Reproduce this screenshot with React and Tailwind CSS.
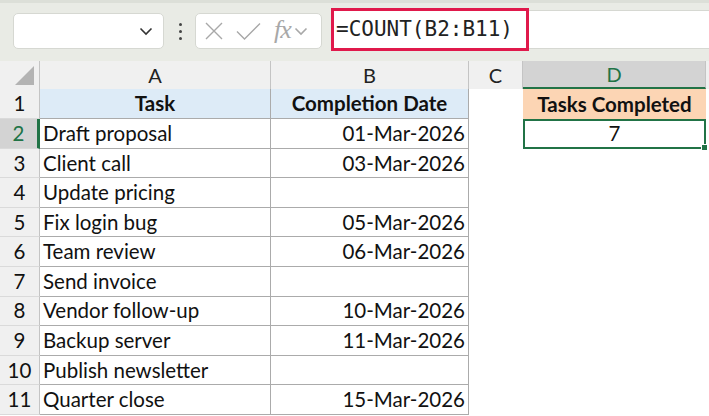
import React from "react";

const rows = [
  ["Draft proposal", "01-Mar-2026"],
  ["Client call", "03-Mar-2026"],
  ["Update pricing", ""],
  ["Fix login bug", "05-Mar-2026"],
  ["Team review", "06-Mar-2026"],
  ["Send invoice", ""],
  ["Vendor follow-up", "10-Mar-2026"],
  ["Backup server", "11-Mar-2026"],
  ["Publish newsletter", ""],
  ["Quarter close", "15-Mar-2026"],
];

const cellFont = { fontFamily: "Lato, 'Open Sans', sans-serif" };

function Chevron({ className }) {
  return (
    <svg width="14" height="9" viewBox="0 0 14 9" className={className}>
      <polyline points="1.5,1.5 7,7 12.5,1.5" fill="none" stroke="currentColor" strokeWidth="1.6" />
    </svg>
  );
}

function Toolbar() {
  return (
    <div className="relative h-[61px] bg-[#e9ebe5] border-t-[3px] border-[#dcdfd8] flex items-start">
      {/* name box */}
      <div className="mt-[10px] ml-[13px] w-[151px] h-[36px] bg-white border border-[#d6d8d2] rounded-[5px] flex items-center justify-end pr-[10px] text-[#333]">
        <Chevron />
      </div>
      {/* colon */}
      <div className="ml-[15px] mt-[20px] flex flex-col gap-[4px]">
        <div className="w-[3px] h-[3px] bg-[#444] rounded-full" />
        <div className="w-[3px] h-[3px] bg-[#444] rounded-full" />
        <div className="w-[3px] h-[3px] bg-[#444] rounded-full" />
      </div>
      {/* function box */}
      <div className="mt-[10px] ml-[13px] w-[127px] h-[36px] bg-white border border-[#d6d8d2] rounded-[5px] flex items-center text-[#a8a8a8]">
        <svg width="18" height="18" viewBox="0 0 18 18" className="ml-[9px]">
          <path d="M1 1 L17 17 M17 1 L1 17" stroke="currentColor" strokeWidth="1.4" fill="none" />
        </svg>
        <svg width="25" height="18" viewBox="0 0 25 18" className="ml-[13px]">
          <polyline points="1,9.5 8.5,17 24,1.5" stroke="currentColor" strokeWidth="1.4" fill="none" />
        </svg>
        <span
          className="ml-[13px] -mt-[2px] italic text-[26px] leading-none tracking-[-1px]"
          style={{ fontFamily: "'Liberation Serif', serif" }}
        >
          fx
        </span>
        <Chevron className="ml-[3px] text-[#a8a8a8]" />
      </div>
      {/* formula bar */}
      <div className="mt-[7px] ml-[10px] flex-1 h-[39px] bg-white border-y border-[#d6d8d2] flex items-center">
        <div className="h-[43px] -ml-px w-[198px] border-[3px] border-[#e0194b] flex items-center pl-[2px]">
          <span className="text-[21px] text-[#222]" style={{ fontFamily: "'DejaVu Sans Mono', monospace" }}>
            =COUNT(B2:B11)
          </span>
        </div>
      </div>
    </div>
  );
}

function ColHeaders() {
  const cols = [
    { l: "A", w: "w-[231px]" },
    { l: "B", w: "w-[198px]" },
    { l: "C", w: "w-[54px]" },
  ];
  return (
    <div className="flex h-[28px] bg-[#f0f0f0] text-[20px] text-[#222]" style={cellFont}>
      <div className="w-[40px] shrink-0 border-r border-[#c4c4c4] relative">
        <div
          className="absolute right-[5px] bottom-[4px] w-[19px] h-[19px] bg-[#b3b3b3]"
          style={{ clipPath: "polygon(100% 0, 100% 100%, 0 100%)" }}
        />
      </div>
      {cols.map((c) => (
        <div key={c.l} className={`${c.w} shrink-0 border-r border-[#c4c4c4] flex items-center justify-center`}>
          {c.l}
        </div>
      ))}
      <div className="w-[183px] shrink-0 bg-[#d3d3d3] border-r border-[#c4c4c4] border-b-2 border-b-[#217346] text-[#217346] flex items-center justify-center">
        D
      </div>
      <div className="flex-1" />
    </div>
  );
}

export default function App() {
  return (
    <div className="w-[709px] h-[416px] overflow-hidden bg-white">
      <Toolbar />
      <ColHeaders />
      <div className="text-[20.5px] text-[#111]" style={cellFont}>
        {/* header row */}
        <div className="flex h-[30px]">
          <div className="w-[40px] shrink-0 bg-[#f0f0f0] border-r border-[#c4c4c4] border-b border-b-[#dadada] flex items-center justify-center">
            1
          </div>
          <div className="w-[231px] shrink-0 bg-[#ddebf7] border-r border-b border-[#ababab] flex items-center justify-center font-bold">
            Task
          </div>
          <div className="w-[198px] shrink-0 bg-[#ddebf7] border-r border-b border-[#ababab] flex items-center justify-center font-bold">
            Completion Date
          </div>
          <div className="w-[54px] shrink-0" />
          <div className="w-[183px] shrink-0 bg-[#fcd5b4] flex items-center justify-center font-bold">
            Tasks Completed
          </div>
        </div>
        {rows.map((r, i) => {
          const n = i + 2;
          const sel = n === 2;
          return (
            <div key={n} className="flex h-[29.6px]">
              <div
                className={`w-[40px] shrink-0 border-b border-b-[#dadada] flex items-center justify-center ${
                  sel ? "bg-[#d3d3d3] text-[#217346] border-r-[3px] border-r-[#217346]" : "bg-[#f0f0f0] border-r border-r-[#c4c4c4]"
                }`}
              >
                {n}
              </div>
              <div className="w-[231px] shrink-0 border-r border-b border-[#ababab] flex items-center pl-[3px]">
                {r[0]}
              </div>
              <div className="w-[198px] shrink-0 border-r border-b border-[#ababab] flex items-center justify-end pr-[3px]">
                {r[1]}
              </div>
              <div className="w-[54px] shrink-0" />
              {sel && (
                <div className="relative w-[183px] shrink-0 border-2 border-[#217346] flex items-center justify-center">
                  7
                  <div className="absolute -right-[4px] -bottom-[4px] w-[7px] h-[7px] bg-[#217346] border border-white" />
                </div>
              )}
            </div>
          );
        })}
      </div>
    </div>
  );
}
